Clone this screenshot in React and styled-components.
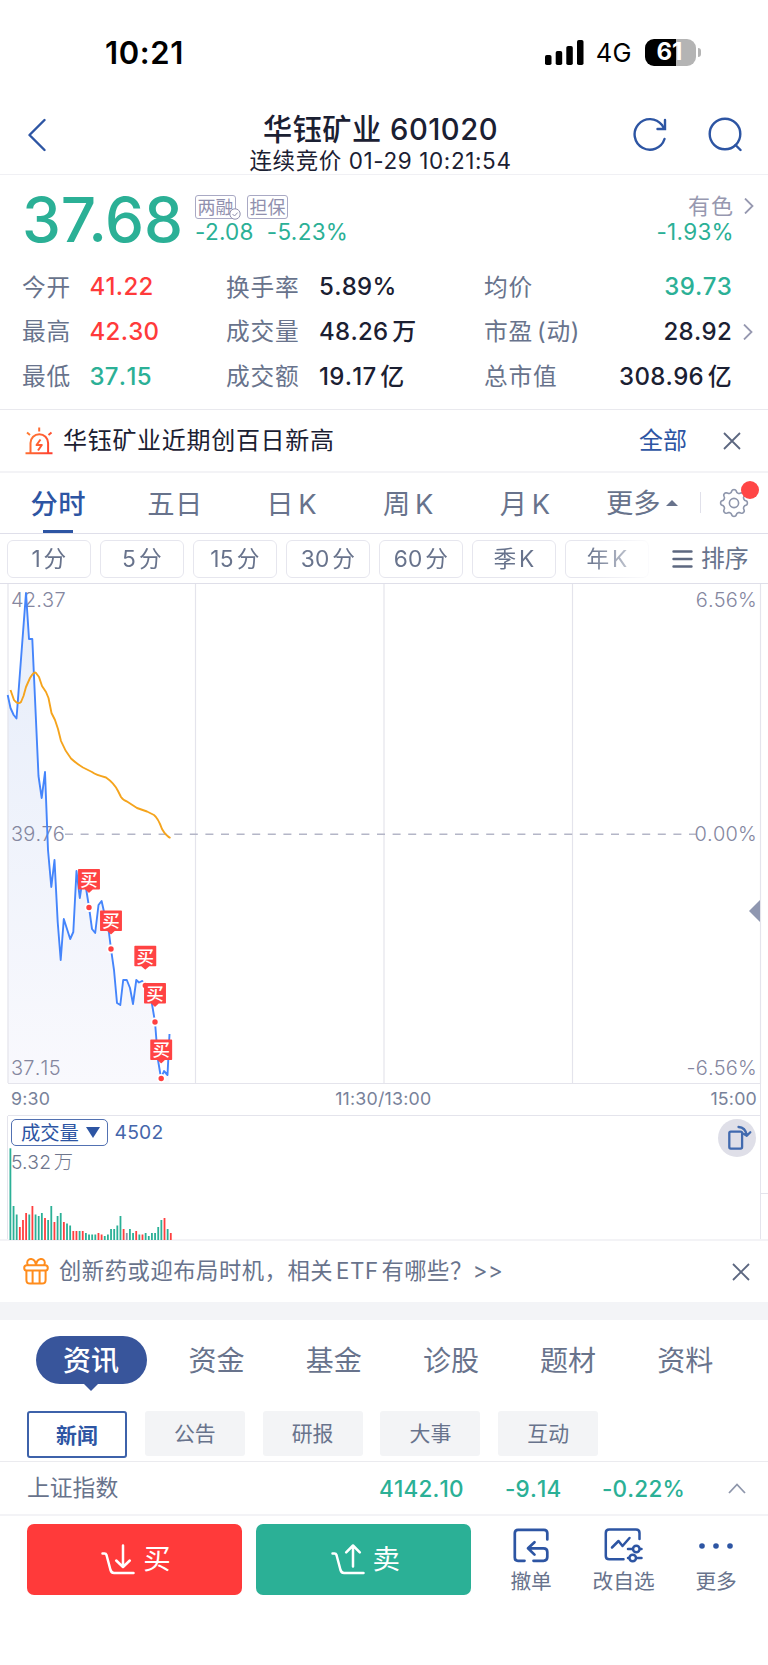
import React from "react";
import styled, { createGlobalStyle, css } from "styled-components";

const GREEN = "#2bb096";
const RED = "#ff3a3a";
const BLUE = "#2d55a3";
const SLATE = "#68738c";
const MUTED = "#9798b0";
const INK = "#1b2032";
const LINE = "#e4e4ec";

const GlobalStyle = createGlobalStyle`
  * {
    box-sizing: border-box;
  }

  body {
    margin: 0;
    background: #fff;
    font-family: Inter, "Noto Sans CJK SC", sans-serif;
    line-height: 1.2;
    color: ${INK};
  }

  svg {
    display: block;
    flex: none;
  }
`;

const Screen = styled.div`
  width: 768px;
  height: 1665px;
  display: flex;
  flex-direction: column;
  overflow: hidden;
  white-space: nowrap;
`;

/* ---------- status bar ---------- */

const StatusBar = styled.div`
  height: 103px;
  padding: 2px 67px 0 105px;
  display: flex;
  align-items: center;
  justify-content: space-between;
`;

const Clock = styled.span`
  padding-top: 1px;
  font-size: 31px;
  font-weight: 600;
  letter-spacing: 0.6px;
  color: #000;
`;

const StatusIcons = styled.div`
  display: flex;
  align-items: center;
`;

const Network = styled.span`
  margin: 2px 13px 0 12px;
  font-size: 25.5px;
  letter-spacing: 0.4px;
  color: #000;
`;

const Battery = styled.div`
  width: 51px;
  height: 27px;
  display: flex;
  align-items: center;
  justify-content: center;
  border-radius: 9px;
  background: linear-gradient(90deg, #000 61%, #b4b4b4 61%);
  color: #fff;
  font-size: 24px;
  font-weight: 700;
  padding-right: 2px;
`;

const BatteryTip = styled.div`
  width: 3px;
  height: 9px;
  margin-left: 2px;
  border-radius: 0 4px 4px 0;
  background: #b4b4b4;
`;

/* ---------- header ---------- */

const Header = styled.header`
  height: 72px;
  padding: 0 26px 0 28px;
  display: grid;
  grid-template-columns: 108px 1fr 109px;
  align-items: start;
  border-bottom: 1px solid #f0f0f4;
`;

const HeaderActions = styled.div`
  display: flex;
  justify-content: space-between;
  padding-top: 14px;
`;

const BackButton = styled.div`
  padding-top: 15px;
`;

const TitleBlock = styled.div`
  display: flex;
  flex-direction: column;
  align-items: center;
  padding: 8px 8px 0 0;
`;

const Title = styled.h1`
  margin: 0;
  font-size: 29.2px;
  font-weight: 500;
  line-height: 37px;
  letter-spacing: 0.5px;
`;

const Subtitle = styled.div`
  font-size: 22.5px;
  line-height: 26px;
  letter-spacing: 0.6px;
`;

/* ---------- quote ---------- */

const Quote = styled.section`
  height: 235px;
  border-bottom: 1px solid #e9e9ee;
`;

const QuoteTop = styled.div`
  height: 90px;
  padding: 20px 14px 0 22px;
  display: flex;
`;

const Price = styled.div`
  width: 173px;
  font-size: 62px;
  font-weight: 500;
  line-height: 50px;
  letter-spacing: -0.2px;
  color: ${GREEN};
`;

const Column = styled.div`
  display: flex;
  flex-direction: column;
  align-items: ${({ $end }) => ($end ? "flex-end" : "flex-start")};
  margin-left: ${({ $end }) => ($end ? "auto" : 0)};
`;

const Badges = styled.div`
  display: flex;
  gap: 11px;
  height: 24px;
`;

const Badge = styled.span`
  position: relative;
  width: 41px;
  height: 24px;
  border: 1px solid #a9a9c4;
  border-radius: 3px;
  font-size: 18px;
  line-height: 23px;
  text-align: center;
  color: #9090ae;
`;

const BadgeCheck = styled.svg`
  position: absolute;
  right: -6px;
  bottom: -2px;
`;

const Change = styled.div`
  display: flex;
  gap: 13px;
  font-size: 22.5px;
  line-height: 26px;
  letter-spacing: 0.3px;
  color: ${GREEN};
`;

const Sector = styled.div`
  display: flex;
  align-items: center;
  gap: 10px;
  height: 24px;
  padding-bottom: 2px;
  font-size: 22px;
  letter-spacing: 1px;
  color: ${MUTED};
`;

const SectorChange = styled(Change)`
  margin-right: 20px;
`;

const Stats = styled.div`
  display: grid;
  grid-template-columns: 67.5px 136.5px 93px 165px 95px 153px 1fr;
  grid-auto-rows: 44.6px;
  align-items: center;
  padding: 0.5px 0 0 22px;
`;

const StatLabel = styled.span`
  font-size: 23.7px;
  letter-spacing: 0.8px;
  word-spacing: -3.5px;
  color: ${SLATE};
`;

const StatValue = styled.span`
  font-size: 24px;
  font-weight: 500;
  font-kerning: none;
  letter-spacing: 0.3px;
  word-spacing: -3px;
  text-align: ${({ $right }) => ($right ? "right" : "left")};
  color: ${({ $color }) => $color || INK};
`;

const StatArrow = styled.span`
  padding-left: 11px;
`;

/* ---------- notice bars ---------- */

const Notice = styled.section`
  height: ${({ $height }) => $height}px;
  padding: ${({ $padding }) => $padding};
  display: flex;
  align-items: center;
  border-bottom: ${({ $line }) => ($line ? "2px solid #f3f3f6" : "none")};
`;

const NoticeText = styled.span`
  margin-left: ${({ $gap }) => $gap}px;
  font-size: ${({ $size }) => $size}px;
  letter-spacing: ${({ $spacing }) => $spacing}px;
  word-spacing: -4px;
  color: ${({ $color }) => $color};
`;

const NoticeLink = styled.span`
  margin: 0 36px 0 auto;
  font-size: 24px;
  color: ${BLUE};
`;

const Spacer = styled.span`
  flex: 1;
`;

/* ---------- chart tabs ---------- */

const Tabs = styled.nav`
  height: 61px;
  display: flex;
  border-bottom: 1px solid #dfdfea;
`;

const Tab = styled.div`
  width: 116.7px;
  display: flex;
  flex-direction: column;
  align-items: center;
  justify-content: space-between;
  padding-top: 14px;
  font-size: 27.3px;
  line-height: 35px;
  letter-spacing: 0.5px;
  word-spacing: -4px;
  font-weight: ${({ $active }) => ($active ? 500 : 400)};
  color: ${({ $active }) => ($active ? BLUE : SLATE)};

  &::after {
    content: "";
    width: 30px;
    height: 3px;
    background: ${({ $active }) => ($active ? BLUE : "transparent")};
  }
`;

const MoreTab = styled.div`
  display: flex;
  align-items: center;
  gap: 5px;
  margin-left: 22.5px;
  padding-top: 3px;
  font-size: 27.3px;
  color: ${SLATE};
`;

const Caret = styled.i`
  margin-bottom: 3px;
  border: 6px solid transparent;
  border-top: 0;
  border-bottom: 6px solid ${SLATE};
`;

const Divider = styled.div`
  width: 1px;
  height: 21px;
  margin: 19px 0 0 22.5px;
  background: #e0e0ea;
`;

const Settings = styled.div`
  position: relative;
  margin: 15px 0 0 18px;
`;

const RedDot = styled.i`
  position: absolute;
  top: -7px;
  left: 22px;
  width: 18px;
  height: 18px;
  border-radius: 50%;
  background: #ff4646;
`;

const Periods = styled.div`
  height: 50px;
  padding: 0 18px 0 7px;
  display: flex;
  align-items: center;
  border-bottom: 1px solid #dfdfe9;
`;

const PeriodList = styled.div`
  display: flex;
  gap: 9px;
  width: 652px;
  mask-image: linear-gradient(90deg, #000 580px, transparent 652px);
`;

const Period = styled.div`
  flex: none;
  width: 84px;
  height: 38px;
  border: 1.5px solid #e6e6ee;
  border-radius: 6px;
  font-size: 22.7px;
  line-height: 36px;
  letter-spacing: 0.3px;
  word-spacing: -4px;
  text-align: center;
  color: ${SLATE};
`;

const Sort = styled.div`
  display: flex;
  align-items: center;
  gap: 8px;
  margin-left: 13px;
  padding-top: 1px;
  font-size: 23.8px;
  color: ${SLATE};
`;

/* ---------- chart ---------- */

const AxisLabel = styled.text`
  font-size: 20px;
  font-weight: 300;
  font-kerning: none;
  letter-spacing: 0.2px;
  fill: #85879f;
`;

const BuyText = styled.text`
  font-size: 17.5px;
  font-weight: 500;
  fill: #fff;
  text-anchor: middle;
`;

const TimeAxis = styled.div`
  height: 32px;
  margin-left: 8px;
  width: 753px;
  padding: 0 3px 2px;
  display: flex;
  align-items: center;
  justify-content: space-between;
  font-size: 17.8px;
  letter-spacing: 0.2px;
  color: #78829a;
  border-right: 1px solid ${LINE};
  border-bottom: 1px solid ${LINE};
`;

const NoonLabel = styled.span`
  padding-left: 6px;
`;

const Volume = styled.div`
  height: 125px;
  display: flex;
  border-bottom: 2px solid #f3f3f6;
`;

const VolumePanel = styled.div`
  position: relative;
  width: 754px;
  margin-left: 7px;
  padding: 3px 4px 0 3px;
  display: flex;
  align-items: flex-start;
  border-left: 1px solid ${LINE};
  border-right: 1px solid ${LINE};
`;

const Gutter = styled.div`
  flex: 1;
  height: 78px;
  border-bottom: 1px solid ${LINE};
`;

const IndicatorSelect = styled.div`
  width: 97px;
  height: 27px;
  padding-left: 9px;
  display: flex;
  align-items: center;
  gap: 7px;
  border: 1.5px solid #5271b2;
  border-radius: 5px;
  font-size: 19.3px;
  line-height: 24px;
  color: ${BLUE};
`;

const Triangle = styled.i`
  border: 7px solid transparent;
  border-bottom: 0;
  border-top: 11px solid ${BLUE};
`;

const VolumeValue = styled.span`
  margin-left: 6.5px;
  font-size: 19.3px;
  line-height: 27px;
  letter-spacing: 0.2px;
  color: #4566ab;
`;

const RotateButton = styled.div`
  width: 38px;
  height: 38px;
  margin-left: auto;
  border-radius: 50%;
  background: #dfdfe8;
`;

const VolumeBars = styled.svg`
  position: absolute;
  left: 1px;
  bottom: -1px;
`;

const VolumeMax = styled.span`
  position: absolute;
  left: 3px;
  top: 35px;
  font-size: 19.3px;
  font-weight: 300;
  letter-spacing: 0.2px;
  word-spacing: -3px;
  color: #6f768d;
`;

const Band = styled.div`
  height: 18px;
  background: #f3f4f7;
`;

/* ---------- info tabs ---------- */

const InfoTabs = styled.nav`
  height: 91px;
  padding: 16px 0 0 35.5px;
  display: flex;
  gap: 61.2px;
`;

const InfoTab = styled.div`
  position: relative;
  height: 48px;
  font-size: 28px;
  line-height: 50px;
  color: ${SLATE};

  ${({ $active }) =>
    $active &&
    css`
      width: 111px;
      margin-right: -19.2px;
      border-radius: 24px;
      background: #38559b;
      color: #fff;
      font-weight: 500;
      text-align: center;

      &::after {
        content: "";
        position: absolute;
        left: 48px;
        top: 48px;
        border: 7.5px solid transparent;
        border-bottom: 0;
        border-top-color: #38559b;
      }
    `}
`;

const Topics = styled.div`
  height: 51px;
  padding-left: 27px;
  display: flex;
  gap: 17.8px;
  border-bottom: 1px solid #ebebef;
`;

const Topic = styled.div`
  width: 100px;
  height: ${({ $active }) => ($active ? 47 : 45)}px;
  border-radius: 3px;
  font-size: 20.9px;
  text-align: center;
  line-height: 46px;
  color: ${SLATE};
  background: #f3f4f6;

  ${({ $active }) =>
    $active &&
    css`
      border: 2px solid #3d62aa;
      background: #fff;
      color: ${BLUE};
      font-weight: 600;
      line-height: 45px;
    `}
`;

/* ---------- index ticker ---------- */

const IndexRow = styled.div`
  height: 54px;
  padding: 0 22px 0 27px;
  display: flex;
  align-items: center;
  border-bottom: 2px solid #f3f3f6;
`;

const IndexName = styled.span`
  width: 352px;
  font-size: 22.8px;
  color: ${SLATE};
`;

const IndexValue = styled.span`
  width: ${({ $width }) => $width}px;
  font-size: 22.5px;
  font-weight: 500;
  font-kerning: none;
  letter-spacing: 0.2px;
  color: ${GREEN};
`;

/* ---------- bottom actions ---------- */

const Actions = styled.footer`
  flex: 1;
  padding: 7.5px 0 0 27px;
  display: flex;
  align-items: flex-start;
`;

const TradeButton = styled.div`
  width: 215px;
  height: 71.5px;
  margin-right: 14.3px;
  padding: 1px 0 0 3px;
  display: flex;
  align-items: center;
  justify-content: center;
  gap: 8px;
  border-radius: 7px;
  background: ${({ $color }) => $color};
  color: #fff;
  font-size: 27.5px;
`;

const ToolItem = styled.div`
  width: ${({ $width }) => $width}px;
  display: flex;
  flex-direction: column;
  align-items: center;
  gap: 5px;
  padding: 4px 0 0 1px;
  font-size: 20.7px;
  line-height: 28px;
  color: ${SLATE};
`;

const stats = [
  ["今开", "41.22", RED, "换手率", "5.89%", "均价", "39.73", GREEN],
  ["最高", "42.30", RED, "成交量", "48.26 万", "市盈 (动)", "28.92", INK],
  ["最低", "37.15", GREEN, "成交额", "19.17 亿", "总市值", "308.96 亿", INK],
];

const periods = ["1 分", "5 分", "15 分", "30 分", "60 分", "季 K", "年 K"];

const pricePath =
  "7.7,695 10.5,708 13.7,715 16.5,718.5 26,593 29,639 32.3,639 38.5,776 41.7,798 45,772 48,850 51.3,887 54.5,860 57.7,922 60.7,960 63.8,919 70.2,939 73.3,932 76.5,871 79.8,898 82.8,878 86,888 89,907 92,929 95.2,933 98.5,905 101.6,901 104.5,914 108,925 111,949 114,970 117,1003 120.3,1005 123.2,980 126.8,980 130,988 133,1004 136.3,980 139,982.5 142,981 145,984 149,985 152,1004 155,1022 158,1060 161,1078 164,1071 167.5,1075 169.5,1034";

const averagePath =
  "M10.5 690 L14 700 Q18 705 21 702 L23.5 696 L26 687 L30 678 Q34 671 36 673 L39 677 L42 686 L46 692 L48.5 698 L51.5 713 L55 720 L58 729 L61 741 Q65 751 71 758.5 Q77 764 83 767.5 L92 772 Q96 775 106 777.5 Q114 783 118 791 L121 797 Q124 801 127 801.5 L137 808 L147 811.5 L154 815 Q158 818 162 829 Q166 836 170.5 838";

const trades = [
  { x: 89, y: 869.5, dot: 907.5 },
  { x: 111, y: 911, dot: 949 },
  { x: 145.3, y: 946.3, dot: 985.5 },
  { x: 155, y: 983.5, dot: 1022 },
  { x: 161.2, y: 1040, dot: 1078.5 },
];

// g = falling minute, r = rising minute, n = unchanged
const volumes =
  "g91.7 g34 g25.5 r13 r20 r27 g25.5 r34 g25.5 g24 g27 r22 g20 g34 r18 g24 g27 r18 g16.5 g14.5 r9 r9 g9 r9 g7 g5.5 g5.5 g5.5 r7 r5.5 g4 g5.5 g11 g11 g14.5 g24 r11 n7 g11 g7 r9 g5.5 r5.5 g7 g4 g7 g7 g13 g20 r22 g11 r7"
    .split(" ")
    .map((v) => ({ kind: v[0], height: Number(v.slice(1)) }));

const barColors = { g: "#2bb096", r: "#ff3f3f", n: "#8f93a8" };

const Chevron = () => (
  <svg width="10" height="16" viewBox="0 0 10 16" fill="none" stroke="#9698b0" strokeWidth="1.8">
    <path d="M1 0.5 L8.5 8 L1 15.5" />
  </svg>
);

const Close = () => (
  <svg width="18" height="18" viewBox="0 0 18 18" fill="none" stroke="#5c6780" strokeWidth="1.8">
    <path d="M1 1 L17 17 M17 1 L1 17" />
  </svg>
);

const SignalIcon = () => (
  <svg width="39" height="25" viewBox="0 0 39 25">
    <rect x="0" y="15" width="6.5" height="10" rx="1.8" />
    <rect x="10.7" y="11" width="6.5" height="14" rx="1.8" />
    <rect x="21.3" y="6" width="6.5" height="19" rx="1.8" />
    <rect x="32" y="0" width="6.5" height="25" rx="1.8" />
  </svg>
);

const BackIcon = () => (
  <svg width="18" height="34" viewBox="0 0 18 34" fill="none" stroke={BLUE} strokeWidth="2.4" strokeLinecap="round" strokeLinejoin="round">
    <path d="M16.5 2 L1.5 17 L16.5 32" />
  </svg>
);

const RefreshIcon = () => (
  <svg width="34" height="36" viewBox="0 0 34 36" fill="none" stroke={BLUE} strokeWidth="2.4" strokeLinecap="round">
    <path d="M31.5 22 A15.3 15.3 0 1 1 29 8 L31 11.5" />
    <path d="M32 3 V12 H24.5" strokeLinejoin="miter" />
  </svg>
);

const SearchIcon = () => (
  <svg width="34" height="36" viewBox="0 0 34 36" fill="none" stroke={BLUE} strokeWidth="2.4" strokeLinecap="round">
    <circle cx="17" cy="17" r="15.3" />
    <path d="M27.5 28 L32.5 33" />
  </svg>
);

const AlarmIcon = () => (
  <svg width="28" height="28" viewBox="0 0 28 28" fill="none" stroke="url(#alarm)" strokeWidth="2">
    <defs>
      <linearGradient id="alarm" gradientUnits="userSpaceOnUse" x1="0" y1="14" x2="28" y2="28">
        <stop offset="0" stopColor="#ff7a33" />
        <stop offset="1" stopColor="#ff3a2f" />
      </linearGradient>
    </defs>
    <path d="M5.5 26 V16 A8.8 8.8 0 0 1 23.1 16 V26" />
    <path d="M0.5 26.2 H27.5 M14.2 0.5 V4.5 M2 5.5 L5 8 M26.5 5.5 L23.5 8" />
    <path d="M15.5 12.5 L11.5 18 H16.8 L13 23.5" strokeLinejoin="round" />
  </svg>
);

// eight rounded teeth built from a sampled radius
const gearPath = Array.from({ length: 97 }, (_, i) => {
  const a = (i / 96) * Math.PI * 2 - Math.PI / 2;
  const r = 12 + 1.5 * Math.tanh(1.6 * Math.cos(8 * a));
  return `${i ? "L" : "M"}${(15 + r * Math.cos(a)).toFixed(2)} ${(15 + r * Math.sin(a)).toFixed(2)}`;
}).join(" ");

const GearIcon = () => (
  <svg width="30" height="30" viewBox="0 0 30 30" fill="none" stroke="#8d95ab" strokeWidth="1.6" strokeLinejoin="round">
    <path d={gearPath} />
    <circle cx="15" cy="15" r="4.6" />
  </svg>
);

const SortIcon = () => (
  <svg width="21" height="18" viewBox="0 0 21 18" stroke="#5d6880" strokeWidth="2.4" strokeLinecap="round">
    <path d="M1.5 1.5 H19.5 M1.5 9 H19.5 M1.5 16.5 H19.5" />
  </svg>
);

const GiftIcon = () => (
  <svg width="26" height="27" viewBox="0 0 26 27" fill="none" stroke="#ff8c1c" strokeWidth="2" strokeLinejoin="round">
    <rect x="1.2" y="7.3" width="23.6" height="5.2" rx="2.6" />
    <path d="M3.4 12.5 V22 Q3.4 25.6 7 25.6 H19 Q22.6 25.6 22.6 22 V12.5 M9.6 12.5 V25.6 M16.6 12.5 V25.6" />
    <path d="M13 7.3 C12 -0.8 4.5 -0.2 4.2 4.5 Q4.2 6 5 7.3 M13 7.3 C14 -0.8 21.5 -0.2 21.8 4.5 Q21.8 6 21 7.3" />
  </svg>
);

const RotateIcon = () => (
  <svg width="38" height="38" viewBox="0 0 38 38" fill="none" stroke="#416aaf" strokeWidth="2.3" strokeLinecap="round" strokeLinejoin="round">
    <rect x="11.3" y="12.6" width="12.8" height="17" rx="1.5" />
    <path d="M20.5 8 Q27.5 8.3 28.8 16.5 M32.3 13.3 L28.8 16.8 L25.6 14.8" />
  </svg>
);

const TradeIcon = ({ up }) => (
  <svg width="34" height="31" viewBox="0 0 34 31" fill="none" stroke="#fff" strokeWidth="2.5" strokeLinecap="round" strokeLinejoin="round">
    <path d="M1.5 9.5 H3.5 Q5 9.5 5.5 11 L9.5 26 Q10.5 29 13 29 H32.5" />
    <path d={up ? "M22 22.5 V1.5 M15.2 8.3 L22 1.5 L28.8 8.3" : "M22 1.5 V22.5 M15.2 16.5 L22 23 L28.8 16.5"} />
  </svg>
);

const CancelIcon = () => (
  <svg width="36" height="35" viewBox="0 0 36 35" fill="none" stroke={BLUE} strokeWidth="2.7" strokeLinecap="round" strokeLinejoin="round">
    <path d="M34.3 11.5 V5 Q34.3 1.8 31 1.8 H5 Q1.8 1.8 1.8 5 V29.5 Q1.8 32.8 5 32.8 H11.5" />
    <path d="M20.5 32.8 H30.5 Q34.3 32.8 34.3 29 V24 Q34.3 20.3 30.5 20.3 H15.5 M21.5 14.2 L15 20.3 L21.5 26.6" />
  </svg>
);

const WatchIcon = () => (
  <svg width="39" height="35" viewBox="0 0 39 35" fill="none" stroke={BLUE} strokeWidth="2.5" strokeLinecap="round" strokeLinejoin="round">
    <path d="M35.5 11 V5 Q35.5 1.6 32 1.6 H5.2 Q1.8 1.6 1.8 5 V28 Q1.8 31.3 5.2 31.3 H19.5" />
    <path d="M8 19.5 L14.5 13 L18.5 18 L25.5 10" />
    <path d="M24 21 H28 M36.5 21 H37.5 M24 30 H24.5 M33.5 30 H37.5" />
    <circle cx="32.3" cy="21" r="3.3" />
    <circle cx="28.7" cy="30" r="3.3" />
  </svg>
);

const DotsIcon = () => (
  <svg width="36" height="35" viewBox="0 0 36 35" fill={BLUE}>
    <circle cx="4" cy="18" r="2.8" />
    <circle cx="18" cy="18" r="2.8" />
    <circle cx="32" cy="18" r="2.8" />
  </svg>
);

const PriceChart = () => (
  <svg width="768" height="500" viewBox="0 584 768 500">
    <defs>
      <linearGradient id="fill" x1="0" y1="0" x2="0" y2="1">
        <stop offset="0" stopColor="#e6edfa" />
        <stop offset="1" stopColor="#f9f9fd" />
      </linearGradient>
    </defs>
    <polygon points={`7.7,1083 ${pricePath} 169.5,1083`} fill="url(#fill)" />
    <path d="M8 584 V1083 M195.5 584 V1083 M384 584 V1083 M572.5 584 V1083 M760.5 584 V1084 M8 1083.5 H761" stroke={LINE} strokeWidth="1.2" />
    <path d="M65 834.2 H696" stroke="#b4b6c7" strokeWidth="1.4" strokeDasharray="8 7.6" />
    <AxisLabel x="11" y="607.2">42.37</AxisLabel>
    <AxisLabel x="11" y="841.2">39.76</AxisLabel>
    <AxisLabel x="11" y="1075.2">37.15</AxisLabel>
    <AxisLabel x="757" y="607.2" textAnchor="end">6.56%</AxisLabel>
    <AxisLabel x="757" y="841.2" textAnchor="end">0.00%</AxisLabel>
    <AxisLabel x="757" y="1075.2" textAnchor="end">-6.56%</AxisLabel>
    <polyline points={pricePath} fill="none" stroke="#4585fb" strokeWidth="1.9" strokeLinejoin="round" />
    <path d={averagePath} fill="none" stroke="#f5a41d" strokeWidth="1.9" strokeLinejoin="round" />
    <path d="M760 900 V922 L749 911 Z" fill="#8f97b0" />
    {trades.map(({ x, dot }) => (
      <circle key={x} cx={x} cy={dot} r="3.6" fill="#ff4040" stroke="#fff" strokeWidth="1.8" />
    ))}
    {trades.map(({ x, y }) => (
      <g key={x}>
        <path d={`M${x - 10.2} ${y + 0.3} H${x + 10.2} V${y + 19.3} H${x + 3.5} L${x} ${y + 22.5} L${x - 3.5} ${y + 19.3} H${x - 10.2} Z`} fill="#ff4343" stroke="#ff4343" strokeWidth="1.5" strokeLinejoin="round" />
        <BuyText x={x} y={y + 16.3}>买</BuyText>
      </g>
    ))}
  </svg>
);

const App = () => {
  return (
    <Screen>
      <GlobalStyle />

      <StatusBar>
        <Clock>10:21</Clock>
        <StatusIcons>
          <SignalIcon />
          <Network>4G</Network>
          <Battery>61</Battery>
          <BatteryTip />
        </StatusIcons>
      </StatusBar>

      <Header>
        <BackButton>
          <BackIcon />
        </BackButton>
        <TitleBlock>
          <Title>华钰矿业 601020</Title>
          <Subtitle>连续竞价 01-29 10:21:54</Subtitle>
        </TitleBlock>
        <HeaderActions>
          <RefreshIcon />
          <SearchIcon />
        </HeaderActions>
      </Header>

      <Quote>
        <QuoteTop>
          <Price>37.68</Price>
          <Column>
            <Badges>
              <Badge>
                两融
                <BadgeCheck width="12" height="12" viewBox="0 0 12 12" fill="#fff" stroke="#9090ae" strokeWidth="1">
                  <circle cx="6" cy="6" r="5.2" />
                  <path d="M3.5 6 L5.5 8 L8.6 4.6" fill="none" />
                </BadgeCheck>
              </Badge>
              <Badge>担保</Badge>
            </Badges>
            <Change>
              <span>-2.08</span>
              <span>-5.23%</span>
            </Change>
          </Column>
          <Column $end>
            <Sector>
              有色
              <Chevron />
            </Sector>
            <SectorChange>-1.93%</SectorChange>
          </Column>
        </QuoteTop>
        <Stats>
          {stats.map(([a, av, ac, b, bv, c, cv, cc]) => (
            <React.Fragment key={a}>
              <StatLabel>{a}</StatLabel>
              <StatValue $color={ac}>{av}</StatValue>
              <StatLabel>{b}</StatLabel>
              <StatValue>{bv}</StatValue>
              <StatLabel>{c}</StatLabel>
              <StatValue $right $color={cc}>{cv}</StatValue>
              <StatArrow>{c.startsWith("市盈") && <Chevron />}</StatArrow>
            </React.Fragment>
          ))}
        </Stats>
      </Quote>

      <Notice $height={63} $padding="1px 27px 0 25px" $line>
        <AlarmIcon />
        <NoticeText $gap={10} $size={24} $spacing={0.7} $color={INK}>
          华钰矿业近期创百日新高
        </NoticeText>
        <NoticeLink>全部</NoticeLink>
        <Close />
      </Notice>

      <Tabs>
        <Tab $active>分时</Tab>
        <Tab>五日</Tab>
        <Tab>日 K</Tab>
        <Tab>周 K</Tab>
        <Tab>月 K</Tab>
        <MoreTab>
          更多
          <Caret />
        </MoreTab>
        <Divider />
        <Settings>
          <GearIcon />
          <RedDot />
        </Settings>
      </Tabs>

      <Periods>
        <PeriodList>
          {periods.map((p) => (
            <Period key={p}>{p}</Period>
          ))}
        </PeriodList>
        <Sort>
          <SortIcon />
          排序
        </Sort>
      </Periods>

      <PriceChart />
      <TimeAxis>
        <span>9:30</span>
        <NoonLabel>11:30/13:00</NoonLabel>
        <span>15:00</span>
      </TimeAxis>

      <Volume>
        <VolumePanel>
          <VolumeBars width="170" height="92" viewBox="9 0 170 92">
            {volumes.map(({ kind, height }, i) => (
              <rect key={i} x={9.5 + i * 3.145} y={92 - height} width="1.8" height={height} fill={barColors[kind]} />
            ))}
          </VolumeBars>
          <IndicatorSelect>
            成交量
            <Triangle />
          </IndicatorSelect>
          <VolumeValue>4502</VolumeValue>
          <VolumeMax>5.32 万</VolumeMax>
          <RotateButton>
            <RotateIcon />
          </RotateButton>
        </VolumePanel>
        <Gutter />
      </Volume>

      <Notice $height={61} $padding="0 18px 0 23px">
        <GiftIcon />
        <NoticeText $gap={10} $size={22.3} $spacing={0.55} $color={SLATE}>
          创新药或迎布局时机，相关 ETF 有哪些？&gt;&gt;
        </NoticeText>
        <Spacer />
        <Close />
      </Notice>
      <Band />

      <InfoTabs>
        <InfoTab $active>资讯</InfoTab>
        <InfoTab>资金</InfoTab>
        <InfoTab>基金</InfoTab>
        <InfoTab>诊股</InfoTab>
        <InfoTab>题材</InfoTab>
        <InfoTab>资料</InfoTab>
      </InfoTabs>

      <Topics>
        <Topic $active>新闻</Topic>
        <Topic>公告</Topic>
        <Topic>研报</Topic>
        <Topic>大事</Topic>
        <Topic>互动</Topic>
      </Topics>

      <IndexRow>
        <IndexName>上证指数</IndexName>
        <IndexValue $width={126}>4142.10</IndexValue>
        <IndexValue $width={97}>-9.14</IndexValue>
        <IndexValue>-0.22%</IndexValue>
        <Spacer />
        <svg width="18" height="11" viewBox="0 0 18 11" fill="none" stroke="#8e96ab" strokeWidth="1.8">
          <path d="M1 10 L9 1.5 L17 10" />
        </svg>
      </IndexRow>

      <Actions>
        <TradeButton $color={RED}>
          <TradeIcon />
          买
        </TradeButton>
        <TradeButton $color={GREEN}>
          <TradeIcon up />
          卖
        </TradeButton>
        <ToolItem $width={90}>
          <CancelIcon />
          撤单
        </ToolItem>
        <ToolItem $width={95}>
          <WatchIcon />
          改自选
        </ToolItem>
        <ToolItem $width={90}>
          <DotsIcon />
          更多
        </ToolItem>
      </Actions>
    </Screen>
  );
};

export default App;
